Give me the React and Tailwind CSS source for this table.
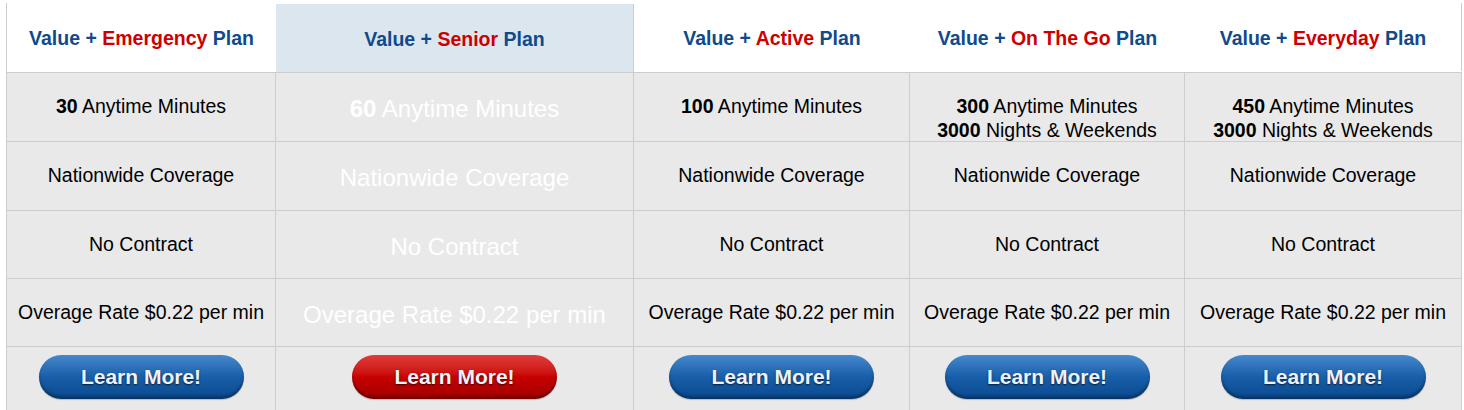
import React from 'react';

const plans = [
    { name: 'Emergency', minutes: '30', nights: null, w: 'w-[269px]' },
    { name: 'Senior', minutes: '60', nights: null, w: 'w-[358px]', featured: true },
    { name: 'Active', minutes: '100', nights: null, w: 'w-[276px]' },
    { name: 'On The Go', minutes: '300', nights: '3000', w: 'w-[275px]' },
    { name: 'Everyday', minutes: '450', nights: '3000', w: 'w-[277px]' },
];

const rowHeights = ['h-[69px]', 'h-[69px]', 'h-[68px]', 'h-[68px]'];

const Cell = ({ plan, height, children }) => (
    <div
        className={`${plan.w} ${height} shrink-0 border-t border-r border-[#cdcdcd] bg-[#e9e9e9] text-center ${
            plan.featured ? 'pt-[22px] text-[24px] leading-[28px] text-white' : 'pt-[21px] text-[19.5px] leading-[24px] text-black'
        }`}
    >
        {children}
    </div>
);

const LearnButton = ({ red }) => (
    <button
        className={`h-[44px] w-[205px] rounded-full text-[21px] font-bold text-[#eef2f8] [text-shadow:0_1px_2px_rgba(0,0,0,0.7)] shadow-[inset_0_-3px_3px_rgba(0,0,0,0.3),0_1px_1px_rgba(0,0,0,0.2)] ${
            red
                ? 'bg-gradient-to-b from-[#e03a3a] via-[#c80000] to-[#a00000]'
                : 'bg-gradient-to-b from-[#4688cc] via-[#175ea9] to-[#0b4a8e]'
        }`}
    >
        Learn More!
    </button>
);

export default function App() {
    const rows = [
        (p) => (
            <>
                <div>
                    <b>{p.minutes}</b> Anytime Minutes
                </div>
                {p.nights && (
                    <div>
                        <b>{p.nights}</b> Nights &amp; Weekends
                    </div>
                )}
            </>
        ),
        () => 'Nationwide Coverage',
        () => 'No Contract',
        () => 'Overage Rate $0.22 per min',
    ];

    return (
        <div className="min-h-[410px] bg-white pl-[6px] pt-[3px] font-['Liberation_Sans',Arial,sans-serif]">
            <div className="w-[1455px] border-l border-[#cdcdcd]">
                {/* header */}
                <div className="flex">
                    {plans.map((p, i) => (
                        <div
                            key={p.name}
                            className={`${p.w} flex h-[68px] shrink-0 items-center justify-center pt-[3px] text-[19.5px] font-bold text-[#0f4a8c] ${
                                p.featured ? 'mt-[1px] h-[67px] border-r border-[#cdcdcd] bg-[#dce6ef]' : ''
                            } ${i === plans.length - 1 ? 'border-r border-[#cdcdcd]' : ''}`}
                        >
                            <span>
                                Value + <span className="text-[#cc0000]">{p.name}</span> Plan
                            </span>
                        </div>
                    ))}
                </div>

                {/* feature rows */}
                {rows.map((render, r) => (
                    <div key={r} className="flex">
                        {plans.map((p) => (
                            <Cell key={p.name} plan={p} height={rowHeights[r]}>
                                {render(p)}
                            </Cell>
                        ))}
                    </div>
                ))}

                {/* buttons */}
                <div className="flex">
                    {plans.map((p) => (
                        <div
                            key={p.name}
                            className={`${p.w} flex h-[80px] shrink-0 justify-center border-t border-r border-[#cdcdcd] bg-[#e9e9e9] pt-[8px]`}
                        >
                            <LearnButton red={p.featured} />
                        </div>
                    ))}
                </div>
            </div>
        </div>
    );
}
